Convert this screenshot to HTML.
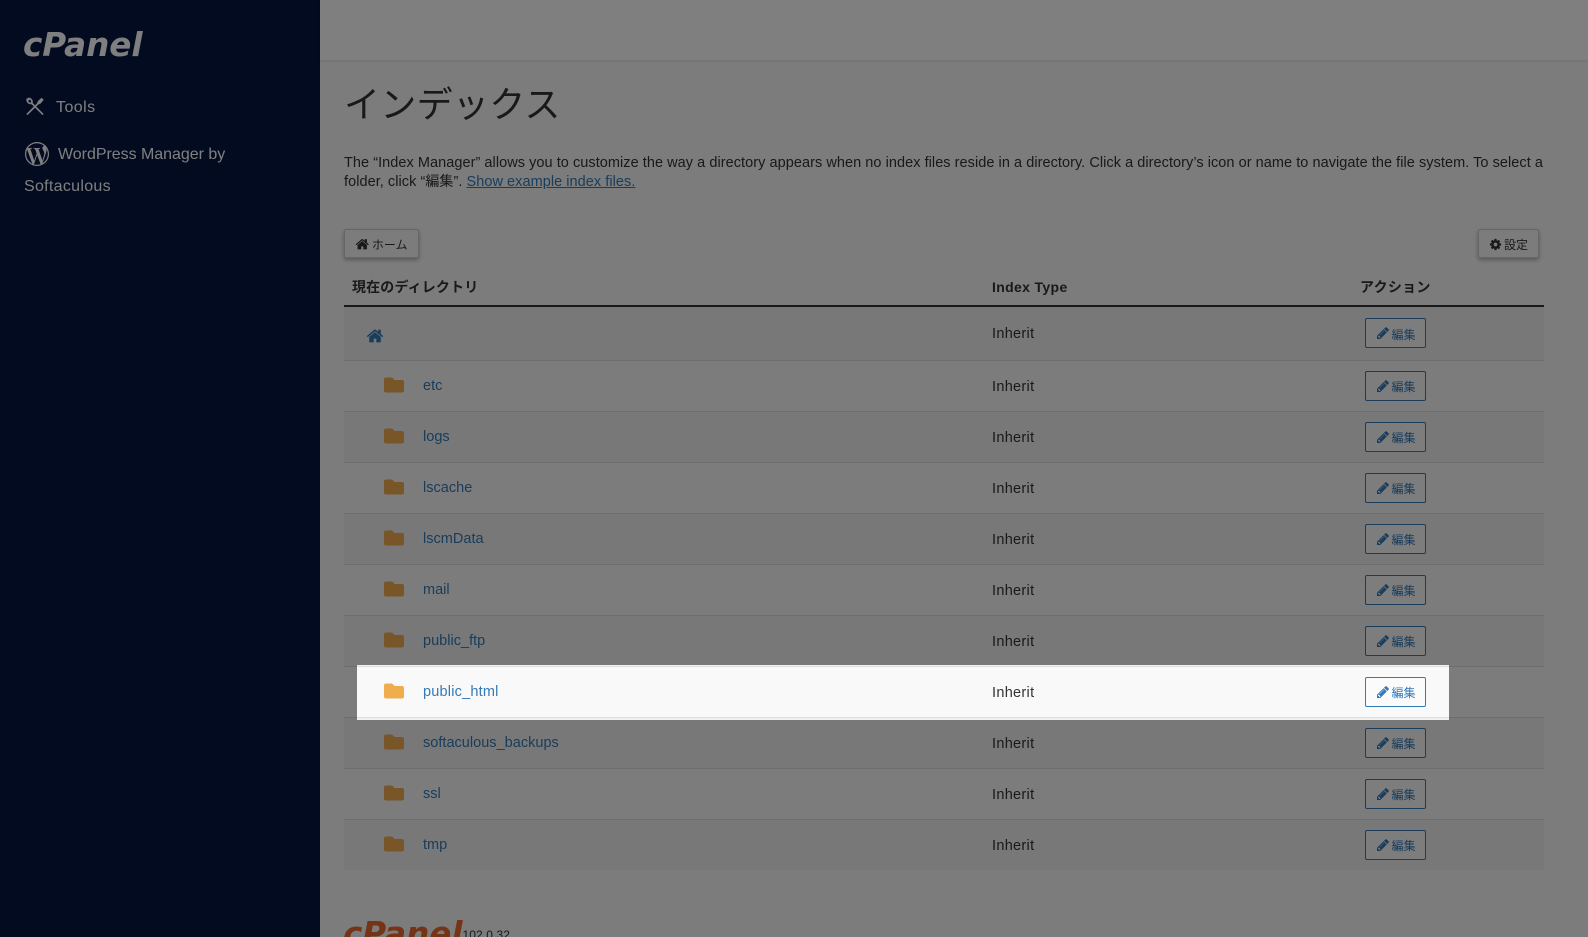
<!DOCTYPE html>
<html lang="ja">
<head>
<meta charset="utf-8">
<title>インデックス</title>
<style>
*{box-sizing:border-box}
html,body{margin:0;padding:0;width:1588px;height:937px;overflow:hidden;background:#f9f9f9}
body{position:relative;font-family:"Liberation Sans","Noto Sans CJK JP",sans-serif;font-size:14px;color:#333}
.a{position:absolute;white-space:nowrap}
#side{left:0;top:0;width:320px;height:937px;background:#041640}
#top{left:320px;top:0;width:1268px;height:60px;background:#fff;box-shadow:0 1px 3px rgba(0,0,0,.1)}
.logo{font-family:"DejaVu Sans",sans-serif;font-weight:bold;font-style:italic;font-size:32.6px;line-height:1}
.nav{color:#fff;font-size:16px;line-height:20px}
h1{margin:0;font-weight:400;font-size:36px;line-height:44px;color:#333;left:344px;top:80px;letter-spacing:.3px;font-family:"Noto Sans CJK JP",sans-serif}
.p{left:344px;font-size:14.5px;line-height:18px;letter-spacing:.05px;color:#333}
.p b{font-weight:400;font-size:14px}
a{color:#337ab7}
.btn{height:29px;background:#f8f8f8;border:1px solid #ccc;border-radius:2px;box-shadow:0 2px 4px rgba(0,0,0,.3);font-size:12px;color:#333;display:flex;align-items:center;justify-content:center;gap:2px}
.btn span{position:relative;top:1px}
.btn svg{position:relative;top:1px}
.th{font-weight:bold;font-size:14px;line-height:20px;color:#333;top:277px;letter-spacing:.27px}
#hl{left:344px;top:305px;width:1200px;height:2px;background:#333}
.r{left:344px;width:1200px;border-bottom:1px solid #ddd}
.r.o{background:#f1f1f1}
.r.e{background:#f9f9f9}
.n{left:423px;color:#337ab7;line-height:20px;font-size:14.5px;letter-spacing:.02px;margin-top:1.5px}
.i{left:992px;line-height:20px;color:#333;font-size:14.5px;letter-spacing:.3px;margin-top:1px}
.f{left:384px;width:20px;height:20px}
.ed{left:1365px;width:61px;height:30px;border:1px solid #337ab7;border-radius:2px;background:#fbfbfb;color:#337ab7;font-size:12px;display:flex;align-items:center;justify-content:center;gap:2px}
.ed svg{transform:translate(1px,0)}
#hole{left:357px;top:665px;width:1092px;height:55px;box-shadow:0 0 0 3000px rgba(0,0,0,.5);z-index:10}
svg{display:block}
</style>
</head>
<body>
<div class="a" id="side"></div>
<div class="a logo" style="left:23px;top:29px;color:#fff">cPanel</div>

<svg class="a" style="left:26px;top:97px" width="18" height="19" viewBox="0 0 19 19" fill="none" stroke="#fff" stroke-width="1.8" stroke-linecap="round"><path d="M6 6 L17.5 17.5"/><path d="M1.5 3.2 L3.4 1.3 M1.3 1.8 C0.9 4.8 3.6 7 6 6 C7 4 5.5 1 2.6 1"/><path d="M1.5 17.5 L11.5 7.5"/><path d="M11.5 7.5 L13 4 L16.5 1 L18 2.5 L15 6 Z" fill="#fff" stroke-width="1"/></svg>
<div class="a nav" style="left:56px;top:98px;letter-spacing:.45px">Tools</div>

<svg class="a" style="left:25px;top:142px" width="24" height="24" viewBox="0 0 24 24" fill="#fff"><path d="M21.469 6.825c.84 1.537 1.318 3.3 1.318 5.175 0 3.979-2.156 7.456-5.363 9.325l3.295-9.527c.615-1.54.82-2.771.82-3.864 0-.405-.026-.78-.07-1.11m-7.981.105c.647-.03 1.232-.105 1.232-.105.582-.075.514-.93-.067-.899 0 0-1.755.135-2.88.135-1.064 0-2.85-.15-2.85-.15-.585-.03-.661.855-.075.885 0 0 .54.061 1.125.09l1.68 4.605-2.37 7.08L5.354 6.9c.649-.03 1.234-.1 1.234-.1.585-.075.516-.93-.065-.896 0 0-1.746.138-2.874.138-.2 0-.438-.008-.69-.015C4.911 3.15 8.235 1.215 12 1.215c2.809 0 5.365 1.072 7.286 2.833-.046-.003-.091-.009-.141-.009-1.06 0-1.812.923-1.812 1.914 0 .89.513 1.643 1.06 2.531.411.72.89 1.643.89 2.977 0 .915-.354 1.994-.821 3.479l-1.075 3.585-3.9-11.61.001.014zM12 22.784c-1.059 0-2.081-.153-3.048-.437l3.237-9.406 3.315 9.087c.024.053.05.101.078.149-1.12.393-2.325.609-3.582.609M1.211 12c0-1.564.336-3.05.935-4.39L7.29 21.709C3.694 19.96 1.212 16.271 1.211 12M12 0C5.385 0 0 5.385 0 12s5.385 12 12 12 12-5.385 12-12S18.615 0 12 0"/></svg>
<div class="a nav" style="left:58px;top:144.5px;letter-spacing:-.03px">WordPress Manager by</div>
<div class="a nav" style="left:24px;top:177px;letter-spacing:.3px">Softaculous</div>

<div class="a" id="top"></div>
<h1 class="a">インデックス</h1>
<div class="a p" style="top:154px">The “Index Manager” allows you to customize the way a directory appears when no index files reside in a directory. Click a directory’s icon or name to navigate the file system. To select a</div>
<div class="a p" style="top:172px">folder, click “<b>編集</b>”. <a href="#">Show example index files.</a></div>

<div class="a btn" style="left:344px;top:229px;width:75px"><svg width="14.5" height="14.5" viewBox="0 0 1792 1792" fill="#333"><path d="M1472 992v480q0 26-19 45t-45 19h-384v-384h-256v384h-384q-26 0-45-19t-19-45v-480q0-1 .5-3t.5-3l575-474 575 474q1 2 1 6zm223-69l-62 74q-8 9-21 11h-3q-13 0-21-7l-692-577-692 577q-12 8-24 7-13-2-21-11l-62-74q-8-10-7-23.5t11-21.5l719-599q32-26 76-26t76 26l244 204v-195q0-14 9-23t23-9h192q14 0 23 9t9 23v408l219 182q10 8 11 21.5t-7 23.5z"/></svg><span>ホーム</span></div>
<div class="a btn" style="left:1478px;top:229px;width:61px"><svg width="13" height="13" viewBox="0 0 1792 1792" fill="#333"><path d="M1152 896q0-106-75-181t-181-75-181 75-75 181 75 181 181 75 181-75 75-181zm512-109v222q0 12-8 23t-20 13l-185 28q-19 54-39 91 35 50 107 138 10 12 10 25t-9 23q-27 37-99 108t-94 71q-12 0-26-9l-138-108q-44 23-91 38-16 136-29 186-7 28-36 28h-222q-14 0-24.5-8.5t-11.5-21.5l-28-184q-49-16-90-37l-141 107q-10 9-25 9-14 0-25-11-126-114-165-168-7-10-7-23 0-12 8-23 15-21 51-66.5t54-70.5q-27-50-41-99l-183-27q-13-2-21-12.5t-8-23.5v-222q0-12 8-23t19-13l186-28q14-46 39-92-40-57-107-138-10-12-10-24 0-10 9-23 26-36 98.5-107.5t94.5-71.5q13 0 26 10l138 107q44-23 91-38 16-136 29-186 7-28 36-28h222q14 0 24.5 8.5t11.5 21.5l28 184q49 16 90 37l142-107q9-9 24-9 13 0 25 10 129 119 165 170 7 8 7 22 0 12-8 23-15 21-51 66.5t-54 70.5q26 50 41 98l183 28q13 2 21 12.5t8 23.5z"/></svg><span>設定</span></div>

<div class="a th" style="left:352px;letter-spacing:.15px">現在のディレクトリ</div>
<div class="a th" style="left:992px;letter-spacing:.35px">Index Type</div>
<div class="a th" style="left:1360px">アクション</div>
<div class="a" id="hl"></div>

<!-- row backgrounds -->
<div class="a r o" style="top:307px;height:54px"></div>
<div class="a r e" style="top:361px;height:51px"></div>
<div class="a r o" style="top:412px;height:51px"></div>
<div class="a r e" style="top:463px;height:51px"></div>
<div class="a r o" style="top:514px;height:51px"></div>
<div class="a r e" style="top:565px;height:51px"></div>
<div class="a r o" style="top:616px;height:51px"></div>
<div class="a r e" style="top:667px;height:51px"></div>
<div class="a r o" style="top:718px;height:51px"></div>
<div class="a r e" style="top:769px;height:51px"></div>
<div class="a r o" style="top:820px;height:50px;border-bottom:0"></div>

<svg class="a" style="left:366px;top:327px" width="18" height="18" viewBox="0 0 1792 1792" fill="#337ab7"><path d="M1472 992v480q0 26-19 45t-45 19h-384v-384h-256v384h-384q-26 0-45-19t-19-45v-480q0-1 .5-3t.5-3l575-474 575 474q1 2 1 6zm223-69l-62 74q-8 9-21 11h-3q-13 0-21-7l-692-577-692 577q-12 8-24 7-13-2-21-11l-62-74q-8-10-7-23.5t11-21.5l719-599q32-26 76-26t76 26l244 204v-195q0-14 9-23t23-9h192q14 0 23 9t9 23v408l219 182q10 8 11 21.5t-7 23.5z"/></svg>

<svg width="0" height="0" style="position:absolute"><defs>
<symbol id="fo" viewBox="0 0 512 512"><path fill="#f0ad4e" d="M464 128H272l-64-64H48C21.49 64 0 85.49 0 112v288c0 26.51 21.49 48 48 48h416c26.51 0 48-21.49 48-48V176c0-26.51-21.49-48-48-48z"/></symbol>
<symbol id="pe" viewBox="0 0 1792 1792"><path fill="#337ab7" d="M491 1536l91-91-235-235-91 91v107h128v128h107zm523-928q0-22-22-22-10 0-17 7l-542 542q-7 7-7 17 0 22 22 22 10 0 17-7l542-542q7-7 7-17zm-54-192l416 416-832 832h-416v-416zm683 96q0 53-37 90l-166 166-416-416 166-165q36-38 90-38 53 0 91 38l235 234q37 39 37 91z"/></symbol>
</defs></svg>

<!-- rows -->
<div class="a i" style="top:323px">Inherit</div>
<div class="a ed" style="top:318px"><svg width="14" height="14"><use href="#pe"/></svg><span style="position:relative;top:1px">編集</span></div>

<svg class="a f" style="top:375px"><use href="#fo"/></svg><div class="a n" style="top:374px">etc</div><div class="a i" style="top:376px">Inherit</div><div class="a ed" style="top:371px"><svg width="14" height="14"><use href="#pe"/></svg>編集</div>
<svg class="a f" style="top:426px"><use href="#fo"/></svg><div class="a n" style="top:425px">logs</div><div class="a i" style="top:427px">Inherit</div><div class="a ed" style="top:422px"><svg width="14" height="14"><use href="#pe"/></svg>編集</div>
<svg class="a f" style="top:477px"><use href="#fo"/></svg><div class="a n" style="top:476px">lscache</div><div class="a i" style="top:478px">Inherit</div><div class="a ed" style="top:473px"><svg width="14" height="14"><use href="#pe"/></svg>編集</div>
<svg class="a f" style="top:528px"><use href="#fo"/></svg><div class="a n" style="top:527px">lscmData</div><div class="a i" style="top:529px">Inherit</div><div class="a ed" style="top:524px"><svg width="14" height="14"><use href="#pe"/></svg>編集</div>
<svg class="a f" style="top:579px"><use href="#fo"/></svg><div class="a n" style="top:578px">mail</div><div class="a i" style="top:580px">Inherit</div><div class="a ed" style="top:575px"><svg width="14" height="14"><use href="#pe"/></svg>編集</div>
<svg class="a f" style="top:630px"><use href="#fo"/></svg><div class="a n" style="top:629px">public_ftp</div><div class="a i" style="top:631px">Inherit</div><div class="a ed" style="top:626px"><svg width="14" height="14"><use href="#pe"/></svg>編集</div>
<svg class="a f" style="top:681px"><use href="#fo"/></svg><div class="a n" style="top:680px;letter-spacing:.2px">public_html</div><div class="a i" style="top:682px">Inherit</div><div class="a ed" style="top:677px"><svg width="14" height="14"><use href="#pe"/></svg>編集</div>
<svg class="a f" style="top:732px"><use href="#fo"/></svg><div class="a n" style="top:731px">softaculous_backups</div><div class="a i" style="top:733px">Inherit</div><div class="a ed" style="top:728px"><svg width="14" height="14"><use href="#pe"/></svg>編集</div>
<svg class="a f" style="top:783px"><use href="#fo"/></svg><div class="a n" style="top:782px">ssl</div><div class="a i" style="top:784px">Inherit</div><div class="a ed" style="top:779px"><svg width="14" height="14"><use href="#pe"/></svg>編集</div>
<svg class="a f" style="top:834px"><use href="#fo"/></svg><div class="a n" style="top:833px">tmp</div><div class="a i" style="top:835px">Inherit</div><div class="a ed" style="top:830px"><svg width="14" height="14"><use href="#pe"/></svg>編集</div>

<div class="a logo" style="left:343px;top:918px;color:#e8682a">cPanel</div>
<div class="a" style="left:462.5px;top:927px;font-size:12px;line-height:16px;color:#333;letter-spacing:.1px">102.0.32</div>

<div class="a" id="hole"></div>
</body>
</html>
